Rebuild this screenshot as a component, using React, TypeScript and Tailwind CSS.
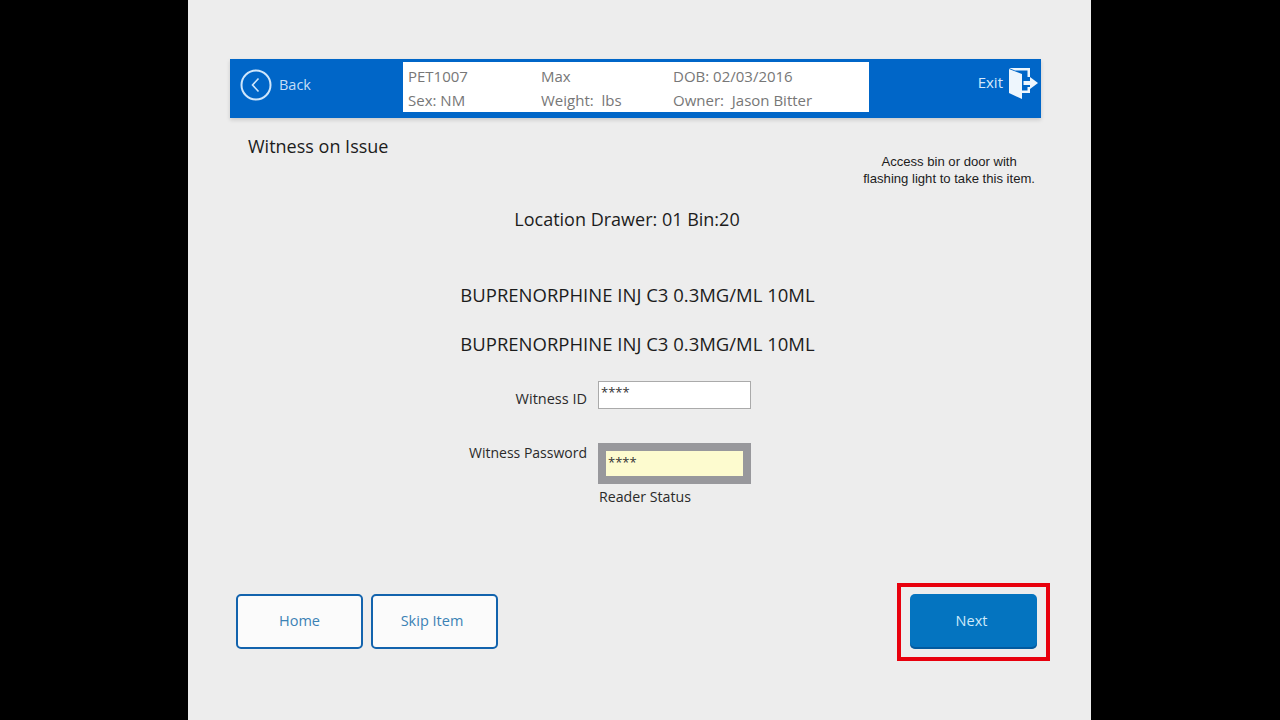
export default function App() {
  const sans = "font-['Open_Sans','Noto_Sans',sans-serif]";
  return (
    <div className="w-[1280px] h-[720px] bg-black overflow-hidden">
      <div className={`ml-[188px] w-[903px] h-[720px] bg-[#ededed] pt-[59px] pl-[42px] pr-[50px] flex flex-col ${sans}`}>
        <div className="h-[59px] shrink-0 bg-[#0066c8] flex items-start shadow-[0_2px_4px_rgba(0,0,0,0.15)]">
          <div className="w-[173px] h-[52px] flex items-center pl-[10px] gap-[7px]">
            <svg width="32" height="32" viewBox="0 0 32 32" fill="none" stroke="#cfe6fb" strokeWidth="2">
              <circle cx="16" cy="16" r="14.5" />
              <path d="M18.5 9.5 L12.5 16 L18.5 22.5" strokeWidth="1.6" />
            </svg>
            <span className="text-[14.5px] text-[#c5def7]">Back</span>
          </div>
          <div className="mt-[3px] w-[466px] h-[50px] bg-white grid grid-cols-[133px_132px_1fr] pl-[5px] text-[15px] leading-[24px] text-[#777777] pt-[2px]">
            <span>PET1007</span>
            <span>Max</span>
            <span>DOB: 02/03/2016</span>
            <span>Sex: NM</span>
            <span>Weight:&nbsp; lbs</span>
            <span>Owner:&nbsp; Jason Bitter</span>
          </div>
          <div className="flex-1 h-[48px] flex items-center justify-end pr-[2px] gap-[6px]">
            <span className="text-[15px] text-[#d5e8fb] mb-[2px]">Exit</span>
            <svg width="30" height="32" viewBox="0 0 30 32" fill="#eef6fd">
              <path d="M0 2 L13 7 V32 L0 26 Z" />
              <path d="M0 1 H21 V10 H18.5 V3.5 H6 Z" />
              <path d="M13 23.5 H18.5 V20 H21 V26 H13 Z" />
              <path d="M14.5 14 H21 V10 L29 16 L21 22 V18 H14.5 Z" />
            </svg>
          </div>
        </div>

        <div className="flex justify-between h-[88px] shrink-0">
          <div className="pl-[18px] pt-[15px] text-[18px] leading-[26px] text-[#1c1c1c]">Witness on Issue</div>
          <div className="pt-[35px] pr-[6px] text-center text-[13.1px] leading-[17px] text-[#1c1c1c] font-['Liberation_Sans',sans-serif]">
            <div>Access bin or door with</div>
            <div>flashing light to take this item.</div>
          </div>
        </div>

        <div className="h-[26px] shrink-0 pr-[17px] flex justify-center items-center text-[18px] text-[#1c1c1c]">
          Location Drawer: 01 Bin:20
        </div>

        <div className="mt-[50px] h-[26px] shrink-0 pl-[4px] flex justify-center items-center text-[18.5px] text-[#1c1c1c]">
          BUPRENORPHINE INJ C3 0.3MG/ML 10ML
        </div>
        <div className="mt-[23px] h-[26px] shrink-0 pl-[4px] flex justify-center items-center text-[18.5px] text-[#1c1c1c]">
          BUPRENORPHINE INJ C3 0.3MG/ML 10ML
        </div>

        <div className="mt-[24px] ml-[368px] flex gap-[11px] items-start h-[28px] shrink-0">
          <span className="w-[140px] pt-[8px] text-right text-[14.5px] leading-[20px] text-[#2a2a2a] -ml-[151px] whitespace-nowrap">
            Witness ID
          </span>
          <div className="w-[153px] h-[28px] bg-white border border-[#aaaaaa] text-[13px] leading-[20px] pl-[2px] text-[#333333]">
            ****
          </div>
        </div>

        <div className="mt-[34px] ml-[368px] flex gap-[11px] items-start h-[41px] shrink-0">
          <span className="w-[140px] text-right text-[14px] leading-[20px] text-[#2a2a2a] -ml-[151px] whitespace-nowrap">
            Witness Password
          </span>
          <div className="w-[153px] h-[41px] bg-[#98989c] p-[8px]">
            <div className="w-full h-full bg-[#fdfbcf] text-[13px] leading-[22px] pl-[2px] text-[#333333]">****</div>
          </div>
        </div>
        <div className="ml-[369px] mt-[3px] h-[20px] shrink-0 text-[14.2px] leading-[20px] text-[#2a2a2a]">Reader Status</div>

        <div className="mt-[87px] pl-[6px] flex items-start gap-[8px] shrink-0 relative">
          <button className="w-[127px] h-[55px] pb-[2px] rounded-[5px] border-2 border-[#1263ad] bg-[#fbfbfb] text-[14.5px] text-[#3b82b5]">
            Home
          </button>
          <button className="w-[127px] h-[55px] pb-[2px] pr-[5px] rounded-[5px] border-2 border-[#1263ad] bg-[#fbfbfb] text-[14.5px] text-[#3b82b5]">
            Skip Item
          </button>
          <button className="ml-auto mr-[4px] w-[127px] h-[55px] pb-[2px] pr-[4px] rounded-[5px] bg-[#0474c0] text-[14.5px] text-[#cfeafa] shadow-[inset_0_-2px_0_rgba(0,60,120,0.45)]">
            Next
          </button>
          <div className="absolute left-[667px] -top-[11px] w-[153px] h-[78px] border-4 border-[#e8000d] pointer-events-none" />
        </div>
      </div>
    </div>
  );
}
